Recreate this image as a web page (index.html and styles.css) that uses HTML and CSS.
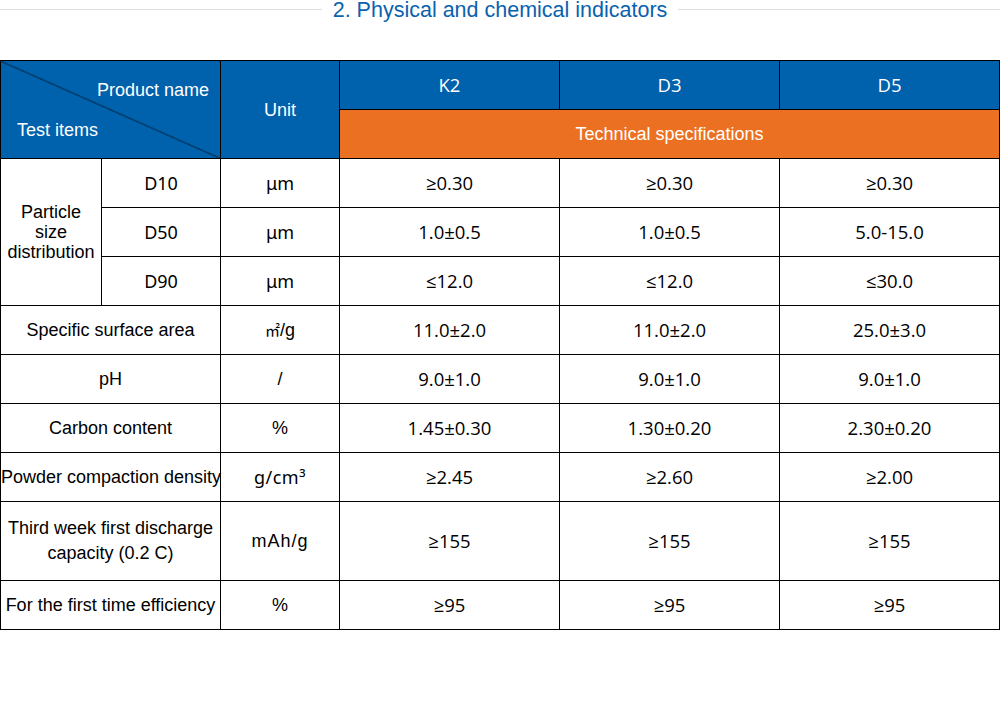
FILE: index.html
```html
<!DOCTYPE html>
<html lang="en">
<head>
<meta charset="utf-8">
<title>Physical and chemical indicators</title>
<link rel="stylesheet" href="styles.css">
</head>
<body>
<div class="title-bar">
  <span class="rule"></span>
  <h2 class="title">2. Physical and chemical indicators</h2>
  <span class="rule"></span>
</div>
<table class="spec">
  <colgroup>
    <col class="c1"><col class="c2"><col class="c3"><col class="c4"><col class="c5"><col class="c6">
  </colgroup>
  <thead>
    <tr class="r-head">
      <th colspan="2" rowspan="2" class="diag">
        <div class="diag-in"><span class="pn">Product name</span><span class="ti">Test items</span></div>
      </th>
      <th rowspan="2" class="hd lbl">Unit</th>
      <th class="hd v">K2</th>
      <th class="hd v">D3</th>
      <th class="hd v">D5</th>
    </tr>
    <tr class="r-head">
      <th colspan="3" class="tech lbl">Technical specifications</th>
    </tr>
  </thead>
  <tbody>
    <tr>
      <td rowspan="3" class="lbl multi">Particle<br>size<br>distribution</td>
      <td class="dj">D10</td>
      <td class="dj">μm</td>
      <td class="v">≥0.30</td><td class="v">≥0.30</td><td class="v">≥0.30</td>
    </tr>
    <tr>
      <td class="dj">D50</td>
      <td class="dj">μm</td>
      <td class="v">1.0±0.5</td><td class="v">1.0±0.5</td><td class="v">5.0-15.0</td>
    </tr>
    <tr>
      <td class="dj">D90</td>
      <td class="dj">μm</td>
      <td class="v">≤12.0</td><td class="v">≤12.0</td><td class="v">≤30.0</td>
    </tr>
    <tr>
      <td colspan="2" class="lbl">Specific surface area</td>
      <td class="sq"><span class="sqm">㎡</span>/g</td>
      <td class="v">11.0±2.0</td><td class="v">11.0±2.0</td><td class="v">25.0±3.0</td>
    </tr>
    <tr>
      <td colspan="2" class="lbl">pH</td>
      <td class="lbl">/</td>
      <td class="v">9.0±1.0</td><td class="v">9.0±1.0</td><td class="v">9.0±1.0</td>
    </tr>
    <tr>
      <td colspan="2" class="lbl">Carbon content</td>
      <td class="lbl">%</td>
      <td class="v">1.45±0.30</td><td class="v">1.30±0.20</td><td class="v">2.30±0.20</td>
    </tr>
    <tr>
      <td colspan="2" class="lbl tight">Powder compaction density</td>
      <td class="dj wide">g/cm³</td>
      <td class="v">≥2.45</td><td class="v">≥2.60</td><td class="v">≥2.00</td>
    </tr>
    <tr class="r-tall">
      <td colspan="2" class="lbl two">Third week first discharge<br>capacity (0.2 C)</td>
      <td class="lbl spaced">mAh/g</td>
      <td class="v">≥155</td><td class="v">≥155</td><td class="v">≥155</td>
    </tr>
    <tr>
      <td colspan="2" class="lbl tight">For the first time efficiency</td>
      <td class="lbl">%</td>
      <td class="v">≥95</td><td class="v">≥95</td><td class="v">≥95</td>
    </tr>
  </tbody>
</table>
</body>
</html>
```
FILE: styles.css
```css
html, body {
  margin: 0;
  padding: 0;
  background: #fff;
}

body {
  font-family: "Liberation Sans", Arial, sans-serif;
  color: #000;
}

.title-bar {
  display: flex;
  align-items: center;
  height: 20px;
}

.rule {
  flex: 1;
  height: 1px;
  background: #dedede;
  margin-top: -1px;
}

.title {
  margin: 0;
  padding: 0 11px;
  font-weight: normal;
  font-size: 21.5px;
  line-height: 22px;
  color: #0a62ae;
  white-space: nowrap;
}

.spec {
  margin-top: 40px;
  width: 999px;
  border-collapse: collapse;
  table-layout: fixed;
}

.c1 { width: 101px; }
.c2 { width: 119px; }
.c3 { width: 119px; }
.c4 { width: 220px; }
.c5 { width: 220px; }
.c6 { width: 220px; }

.spec th,
.spec td {
  border: 1px solid #000;
  padding: 0;
  text-align: center;
  vertical-align: middle;
  font-weight: normal;
}

.spec tr { height: 49px; }
.spec tr.r-tall { height: 79px; }

.hd {
  background: #0061ad;
  color: #fff;
}

.tech {
  background: #ec7022;
  color: #fff;
}

.spec .diag {
  background-color: #0061ad;
  background-image: linear-gradient(to top right, transparent calc(50% - 0.6px), #000 50%, transparent calc(50% + 0.6px));
  color: #fff;
  vertical-align: top;
}

.diag-in {
  display: flex;
  flex-direction: column;
  gap: 20px;
  padding: 19px 11px 0 16px;
  font-size: 18px;
  line-height: 20px;
}

.pn { align-self: flex-end; }
.ti { align-self: flex-start; }

.lbl {
  font-family: "Liberation Sans", Arial, sans-serif;
  font-size: 18px;
  line-height: 20px;
}

.multi { line-height: 20px; }
.two { line-height: 25px; }

.tight {
  white-space: nowrap;
  overflow: visible;
}

.spaced { letter-spacing: 1px; }

.v {
  font-family: "Open Sans", "Noto Sans", sans-serif;
  font-size: 18.5px;
  line-height: 20px;
}

.dj {
  font-family: "Noto Sans", "Open Sans", sans-serif;
  font-size: 18px;
  line-height: 20px;
}

.dj.wide { font-size: 18px; letter-spacing: 0.5px; }

.sq {
  font-family: "Liberation Sans", Arial, sans-serif;
  font-size: 18px;
  line-height: 20px;
}

.sqm {
  font-family: "Noto Sans CJK SC", "Liberation Serif", serif;
  font-size: 15px;
}
```
